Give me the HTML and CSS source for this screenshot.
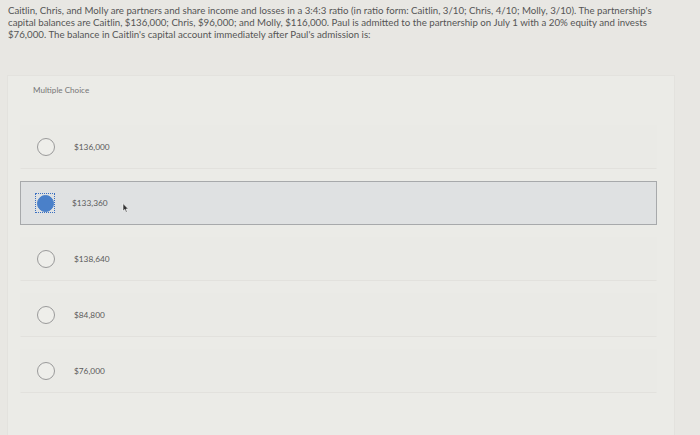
FILE: index.html
```html
<!DOCTYPE html>
<html>
<head>
<meta charset="utf-8">
<link rel="stylesheet" href="styles.css">
</head>
<body>
<div class="page">
  <p class="question">Caitlin, Chris, and Molly are partners and share income and losses in a 3:4:3 ratio (in ratio form: Caitlin, 3/10; Chris, 4/10; Molly, 3/10). The partnership's<br>capital balances are Caitlin, $136,000; Chris, $96,000; and Molly, $116,000. Paul is admitted to the partnership on July 1 with a 20% equity and invests<br>$76,000. The balance in Caitlin's capital account immediately after Paul's admission is:</p>
  <div class="card">
    <div class="label">Multiple Choice</div>
    <div class="options">
      <div class="option"><span class="radio"></span><span class="value">$136,000</span></div>
      <div class="option selected"><span class="focus"><span class="radio on"></span></span><span class="value">$133,360</span><span class="cursor">
        <svg width="7" height="10" viewBox="0 0 7 10"><path d="M1 0.5 L1 8 L2.8 6.4 L4 9.3 L5.2 8.8 L4 6 L6.4 6 Z" fill="#333" stroke="#fff" stroke-width="0.6"/></svg></span></div>
      <div class="option"><span class="radio"></span><span class="value">$138,640</span></div>
      <div class="option"><span class="radio"></span><span class="value">$84,800</span></div>
      <div class="option"><span class="radio"></span><span class="value">$76,000</span></div>
    </div>
  </div>
</div>
</body>
</html>
```
FILE: styles.css
```css
html, body {
  margin: 0;
  padding: 0;
  background: #e8e7e3;
}
.page {
  width: 700px;
  height: 435px;
  overflow: hidden;
  font-family: Lato, "Open Sans", sans-serif;
}
.question {
  margin: 0;
  padding: 4px 0 0 8px;
  font-size: 9.7px;
  line-height: 12px;
  color: #555555;
  white-space: nowrap;
}
.card {
  margin: 36px 26px 0 8px;
  background: #ebebe7;
  height: 400px;
  padding-top: 9px;
  box-shadow: 0 0 0 1px #e3e2de;
}
.label {
  padding-left: 25px;
  font-size: 8.1px;
  line-height: 10px;
  color: #767676;
}
.options {
  display: flex;
  flex-direction: column;
  gap: 12px;
  margin-top: 30px;
  padding: 0 17px 0 12px;
}
.option {
  position: relative;
  display: flex;
  align-items: center;
  height: 42px;
  padding-left: 16px;
  background: #eaeae6;
  border: 1px solid transparent;
  border-bottom-color: #e2e1dd;
}
.option.selected {
  background: #dfe1e2;
  border: 1px solid #a7a9ab;
}
.radio {
  width: 16px;
  height: 16px;
  border: 1px solid #9a9a9a;
  border-radius: 50%;
  background: #eeeeea;
  flex: none;
}
.radio.on {
  width: 15px;
  height: 15px;
  background: #4a80c9;
  border-color: #4a80c9;
}
.focus {
  display: flex;
  align-items: center;
  justify-content: center;
  width: 20px;
  height: 20px;
  margin-left: -2px;
  margin-right: -2px;
  border: 1px dotted #3a6fc0;
  box-sizing: border-box;
  flex: none;
}
.value {
  margin-left: 19px;
  font-size: 8.3px;
  color: #5a5a5a;
}
.cursor {
  margin-left: 14px;
  margin-top: 9px;
  display: flex;
}
```
